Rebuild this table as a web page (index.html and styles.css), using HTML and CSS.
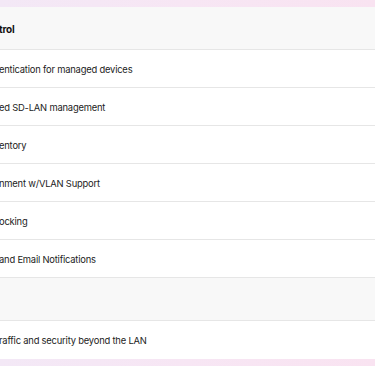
FILE: index.html
```html
<!DOCTYPE html>
<html lang="en">
<head>
  <meta charset="UTF-8" />
  <meta name="viewport" content="width=device-width, initial-scale=1.0" />
  <title>Feature Comparison</title>
  <link rel="stylesheet" href="styles.css">
</head>
<body>
  <div class="page">
    <div class="table">
      <div class="row head"><span>trol</span></div>
      <div class="row"><span>entication for managed devices</span></div>
      <div class="row"><span>ed SD-LAN management</span></div>
      <div class="row"><span>entory</span></div>
      <div class="row"><span>nment w/VLAN Support</span></div>
      <div class="row"><span>ocking</span></div>
      <div class="row"><span>and Email Notifications</span></div>
      <div class="row section"><span></span></div>
      <div class="row last"><span>raffic and security beyond the LAN</span></div>
    </div>
  </div>
</body>
</html>
```

FILE: styles.css
```css
* {
  box-sizing: border-box;
  font-family: 'Inter', sans-serif;
}
body {
  margin: 0;
  padding: 0;
  background: linear-gradient(90deg, #f3e8f6 0%, #f7e6f4 50%, #f9e3f1 100%);
  min-height: 100vh;
}
.page {
  padding-top: 7px;
}
.table {
  background: #fff;
}
.row {
  display: flex;
  align-items: center;
  height: 38px;
  padding-top: 1px;
  border-bottom: 1px solid #e6e6e6;
  font-size: 9.4px;
  color: #1c1c1c;
  letter-spacing: -0.2px;
}
.row span {
  margin-left: -1px;
}
.head {
  height: 43px;
  background: #f8f8f8;
  font-size: 10px;
  font-weight: 700;
  color: #111;
}
.section {
  height: 43px;
  background: #f8f8f8;
}
.last {
  border-bottom: none;
}
```
